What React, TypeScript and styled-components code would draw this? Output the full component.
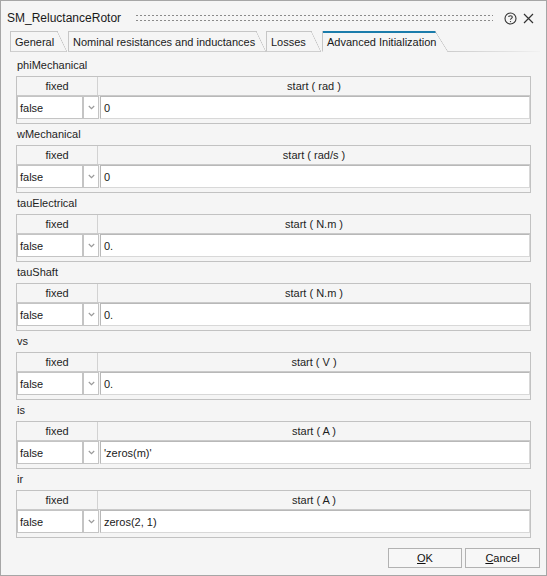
import React from "react";
import styled, { createGlobalStyle, css } from "styled-components";

const GlobalStyle = createGlobalStyle`
  html, body { margin: 0; padding: 0; background: #ffffff; }
  body { font-family: "Liberation Sans", Arial, sans-serif; font-size: 11px; color: #1e1e1e; }
  * { box-sizing: border-box; }
`;

const Window = styled.div`
  width: 547px;
  height: 576px;
  border: 1px solid #a6a6a6;
  background: #f5f5f5;
  display: flex;
  flex-direction: column;
`;

const TitleBar = styled.div`
  height: 30px;
  display: flex;
  align-items: center;
  padding: 4px 9px 0 6px;
`;

const Title = styled.div`
  font-size: 12px;
  color: #1a1a1a;
  white-space: nowrap;
`;

const Grip = styled.div`
  flex: 1;
  height: 10px;
  margin: 0 8px 0 14px;
  background-image: radial-gradient(circle, #8a8a8a 0.6px, transparent 0.9px);
  background-size: 4px 5px;
  background-position: 0 0;
`;

const IconButton = styled.div`
  width: 18px;
  height: 16px;
  display: flex;
  align-items: center;
  justify-content: center;
  color: #333;
`;

const TabStrip = styled.div`
  height: 21px;
  display: flex;
  padding-left: 9px;
  padding-right: 6px;
`;

const Tab = styled.div<{ $w: number; $active?: boolean; $gap: number }>`
  position: relative;
  width: ${(p) => p.$w}px;
  margin-right: ${(p) => p.$gap}px;
  height: 100%;
  padding: 5px 0 0 4px;
  border-left: 1px solid #c6c6c6;
  border-bottom: 1px solid ${(p) => (p.$active ? "transparent" : "#cfcfcf")};
  white-space: nowrap;
  color: #1a1a1a;
  &::before {
    content: "";
    position: absolute;
    left: 0;
    top: 0;
    right: ${(p) => (p.$active ? 12 : 9)}px;
    height: ${(p) => (p.$active ? 2 : 1)}px;
    background: ${(p) => (p.$active ? "#1b7cab" : "#c6c6c6")};
  }
  &::after {
    content: "";
    position: absolute;
    top: 0;
    right: 0;
    bottom: -1px;
    width: ${(p) => (p.$active ? 13 : 10)}px;
    background: linear-gradient(
      to top right,
      transparent calc(50% - 0.6px),
      #c4c4c4 50%,
      transparent calc(50% + 0.6px)
    );
  }
`;

const TabFiller = styled.div`
  flex: 1;
  border-bottom: 1px solid transparent;
  border-image: linear-gradient(to right, #cccccc, #e4e4e4 70%, #f2f2f2) 1;
`;

const Content = styled.div`
  flex: 1;
  padding: 5px 15px 0 15px;
  display: flex;
  flex-direction: column;
`;

const Section = styled.div`
  display: flex;
  flex-direction: column;
  margin-bottom: 2px;
`;

const Label = styled.div`
  height: 16px;
  line-height: 16px;
  margin-bottom: 3px;
  padding-left: 1px;
  color: #1e1e1e;
`;

const Table = styled.div`
  width: 515px;
  height: 48px;
  border: 1px solid #c2c2c2;
  background: #f5f5f5;
  display: flex;
  flex-direction: column;
`;

const HeadRow = styled.div`
  height: 19px;
  display: flex;
  border-bottom: 1px solid #cacaca;
`;

const HeadCell = styled.div<{ $w?: number }>`
  ${(p) =>
    p.$w
      ? css`
          width: ${p.$w}px;
          border-right: 1px solid #d2d2d2;
        `
      : css`
          flex: 1;
        `}
  text-align: center;
  line-height: 18px;
  color: #1e1e1e;
`;

const BodyRow = styled.div`
  height: 23px;
  display: flex;
  gap: 1px;
`;

const Cell = styled.div<{ $w?: number }>`
  ${(p) =>
    p.$w
      ? css`
          width: ${p.$w}px;
        `
      : css`
          flex: 1;
        `}
  height: 100%;
  background: #ffffff;
  border: 1px solid #c4c4c4;
  display: flex;
  align-items: center;
  color: #1a1a1a;
`;

const SelectCell = styled(Cell)`
  padding-left: 2px;
`;

const ArrowCell = styled(Cell)`
  justify-content: center;
  margin-left: -1px;
`;

const InputCell = styled(Cell)`
  border-color: #b8b8b8 #d8d8d8 #d8d8d8 #b8b8b8;
  padding-left: 3px;
`;

const Footer = styled.div`
  display: flex;
  justify-content: flex-end;
  gap: 3px;
  padding: 0 6px 7px 0;
`;

const Button = styled.div<{ $w: number }>`
  width: ${(p) => p.$w}px;
  height: 20px;
  border: 1px solid #b2b2b2;
  background: #f7f7f7;
  display: flex;
  align-items: center;
  justify-content: center;
  color: #111;
  u { text-decoration: underline; text-underline-offset: 1px; }
`;

const Chevron = () => (
  <svg width="7" height="5" viewBox="0 0 7 5">
    <polyline points="0.8,1 3.5,3.6 6.2,1" fill="none" stroke="#9a9a9a" strokeWidth="1.2" />
  </svg>
);

const HelpIcon = () => (
  <svg width="13" height="13" viewBox="0 0 13 13">
    <circle cx="6.5" cy="6.5" r="5.5" fill="none" stroke="#333" strokeWidth="1.1" />
    <path d="M4.7 5.1 C4.7 3.2 8.3 3.2 8.3 5.1 C8.3 6.4 6.5 6.4 6.5 7.8" fill="none" stroke="#333" strokeWidth="1.1" />
    <circle cx="6.5" cy="9.6" r="0.7" fill="#333" />
  </svg>
);

const CloseIcon = () => (
  <svg width="11" height="11" viewBox="0 0 11 11">
    <path d="M1 1 L10 10 M10 1 L1 10" stroke="#333" strokeWidth="1.2" />
  </svg>
);

const sections = [
  { name: "phiMechanical", unit: "start ( rad )", value: "0" },
  { name: "wMechanical", unit: "start ( rad/s )", value: "0" },
  { name: "tauElectrical", unit: "start ( N.m )", value: "0." },
  { name: "tauShaft", unit: "start ( N.m )", value: "0." },
  { name: "vs", unit: "start ( V )", value: "0." },
  { name: "is", unit: "start ( A )", value: "'zeros(m)'" },
  { name: "ir", unit: "start ( A )", value: "zeros(2, 1)" },
];

const tabs = [
  { label: "General", w: 57, gap: 1 },
  { label: "Nominal resistances and inductances", w: 198, gap: 0 },
  { label: "Losses", w: 55, gap: 1 },
  { label: "Advanced Initialization", w: 126, gap: 0, active: true },
];

export default function App() {
  return (
    <>
      <GlobalStyle />
      <Window>
        <TitleBar>
          <Title>SM_ReluctanceRotor</Title>
          <Grip />
          <IconButton>
            <HelpIcon />
          </IconButton>
          <IconButton>
            <CloseIcon />
          </IconButton>
        </TitleBar>
        <TabStrip>
          {tabs.map((t) => (
            <Tab key={t.label} $w={t.w} $gap={t.gap} $active={t.active}>
              {t.label}
            </Tab>
          ))}
          <TabFiller />
        </TabStrip>
        <Content>
          {sections.map((s) => (
            <Section key={s.name}>
              <Label>{s.name}</Label>
              <Table>
                <HeadRow>
                  <HeadCell $w={81}>fixed</HeadCell>
                  <HeadCell>{s.unit}</HeadCell>
                </HeadRow>
                <BodyRow>
                  <SelectCell $w={66}>false</SelectCell>
                  <ArrowCell $w={16}>
                    <Chevron />
                  </ArrowCell>
                  <InputCell>{s.value}</InputCell>
                </BodyRow>
              </Table>
            </Section>
          ))}
        </Content>
        <Footer>
          <Button $w={74}>
            <span>
              <u>O</u>K
            </span>
          </Button>
          <Button $w={75}>
            <span>
              <u>C</u>ancel
            </span>
          </Button>
        </Footer>
      </Window>
    </>
  );
}
